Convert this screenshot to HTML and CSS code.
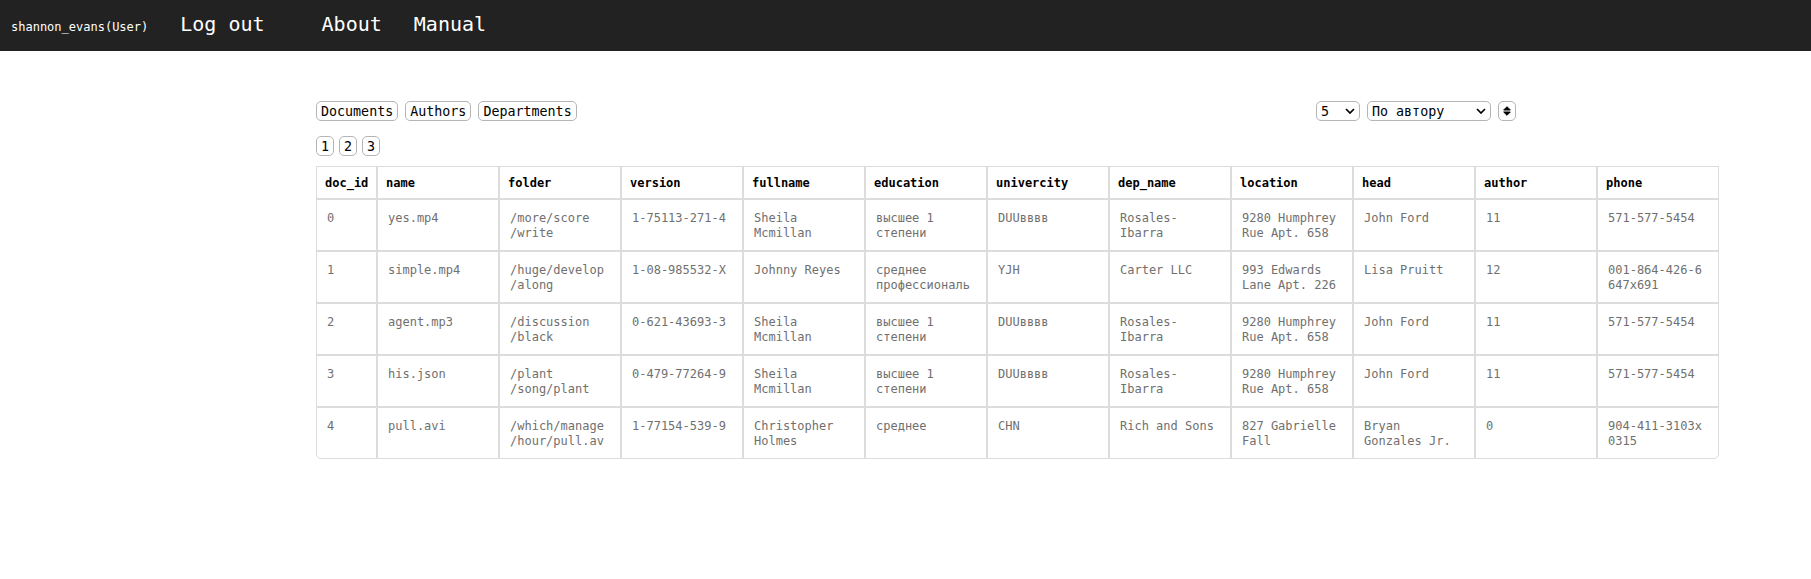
FILE: index.html
```html
<!DOCTYPE html>
<html lang="ru">
<head>
<meta charset="utf-8">
<title>Documents</title>
<link rel="stylesheet" href="styles.css">
</head>
<body>
<nav class="navbar">
  <span class="user">shannon_evans(User)</span>
  <a class="nav-link logout" href="#">Log out</a>
  <a class="nav-link" href="#">About</a>
  <a class="nav-link" href="#">Manual</a>
</nav>
<main class="container">
  <div class="toolbar">
    <div class="group">
      <button class="control" type="button">Documents</button>
      <button class="control" type="button">Authors</button>
      <button class="control" type="button">Departments</button>
    </div>
    <div class="group">
      <select class="control size" aria-label="Rows per page"><option>5</option></select>
      <select class="control order" aria-label="Sort by"><option>По автору</option></select>
      <button class="control sort" type="button" aria-label="Sort direction">
        <svg class="sort-icon" viewBox="0 0 8 10"><path d="M4 .7 7.3 4H.7ZM.7 6H7.3L4 9.3Z"/></svg>
      </button>
    </div>
  </div>
  <div class="pages">
    <button class="control" type="button">1</button>
    <button class="control" type="button">2</button>
    <button class="control" type="button">3</button>
  </div>
  <table class="data">
    <thead>
      <tr><th class="id">doc_id</th><th>name</th><th>folder</th><th>version</th><th>fullname</th><th>education</th><th>univercity</th><th>dep_name</th><th>location</th><th>head</th><th>author</th><th>phone</th></tr>
    </thead>
    <tbody>
      <tr><td>0</td><td>yes.mp4</td><td>/more/score /write</td><td>1-75113-271-4</td><td>Sheila Mcmillan</td><td>высшее 1 степени</td><td>DUUвввв</td><td>Rosales-Ibarra</td><td>9280 Humphrey Rue Apt. 658</td><td>John Ford</td><td>11</td><td>571-577-5454</td></tr>
      <tr><td>1</td><td>simple.mp4</td><td>/huge/develop /along</td><td>1-08-985532-X</td><td>Johnny Reyes</td><td>среднее профессиональ</td><td>YJH</td><td>Carter LLC</td><td>993 Edwards Lane Apt. 226</td><td>Lisa Pruitt</td><td>12</td><td>001-864-426-6647x691</td></tr>
      <tr><td>2</td><td>agent.mp3</td><td>/discussion /black</td><td>0-621-43693-3</td><td>Sheila Mcmillan</td><td>высшее 1 степени</td><td>DUUвввв</td><td>Rosales-Ibarra</td><td>9280 Humphrey Rue Apt. 658</td><td>John Ford</td><td>11</td><td>571-577-5454</td></tr>
      <tr><td>3</td><td>his.json</td><td>/plant /song/plant</td><td>0-479-77264-9</td><td>Sheila Mcmillan</td><td>высшее 1 степени</td><td>DUUвввв</td><td>Rosales-Ibarra</td><td>9280 Humphrey Rue Apt. 658</td><td>John Ford</td><td>11</td><td>571-577-5454</td></tr>
      <tr><td>4</td><td>pull.avi</td><td>/which/manage /hour/pull.av</td><td>1-77154-539-9</td><td>Christopher Holmes</td><td>среднее</td><td>CHN</td><td>Rich and Sons</td><td>827 Gabrielle Fall</td><td>Bryan Gonzales Jr.</td><td>0</td><td>904-411-3103x0315</td></tr>
    </tbody>
  </table>
</main>
</body>
</html>
```
FILE: styles.css
```css
* {
  box-sizing: border-box;
}

body {
  margin: 0;
  background: #fff;
  color: #000;
  font-family: "DejaVu Sans Mono", monospace;
  font-size: 12px;
  line-height: 15px;
}

.navbar {
  display: flex;
  align-items: baseline;
  gap: 32px;
  padding: 12px 11px 15px;
  background: #222;
  color: #fff;
}

.nav-link {
  color: #fff;
  font-size: 20px;
  line-height: 24px;
  text-decoration: none;
}

.logout {
  margin-right: 25px;
}

.container {
  max-width: 1221px;
  margin: 0 auto;
  padding: 50px 0 20px 21px;
}

.toolbar {
  display: flex;
  justify-content: space-between;
}

.group {
  display: flex;
  gap: 7px;
}

.pages {
  display: flex;
  gap: 5px;
  margin: 15px 0 10px;
}

.control {
  height: 20px;
  padding: 0 4px;
  border: 1px solid #b5b5b5;
  border-radius: 5px;
  background: #fff;
  color: #000;
  font-family: inherit;
}

select.control {
  appearance: none;
  background: #fff url("data:image/svg+xml,%3Csvg xmlns='http://www.w3.org/2000/svg' width='10' height='6' viewBox='0 0 10 6'%3E%3Cpath d='M1 1 5 5 9 1' fill='none' stroke='%23000' stroke-width='1.7'/%3E%3C/svg%3E") no-repeat right 4px center;
}

.size {
  width: 44px;
}

.order {
  width: 124px;
}

.sort {
  display: flex;
  align-items: center;
  justify-content: center;
  width: 18px;
}

.sort-icon {
  width: 8px;
  height: 10px;
  stroke: #000;
  stroke-linejoin: round;
}

.data {
  table-layout: fixed;
  width: 1403px;
  border-spacing: 0;
}

.data th,
.data td {
  border: 1px solid #dcdcdc;
  text-align: left;
  vertical-align: top;
}

.data th {
  padding: 9px 8px 7px;
}

.data .id {
  width: 61px;
  padding-right: 0;
}

.data td {
  padding: 11px 10px 9px;
  color: #707070;
  overflow-wrap: anywhere;
}

.data td:last-child {
  word-break: break-all;
}

.data tr:last-child td:first-child {
  border-bottom-left-radius: 5px;
}

.data tr:last-child td:last-child {
  border-bottom-right-radius: 5px;
}
```
